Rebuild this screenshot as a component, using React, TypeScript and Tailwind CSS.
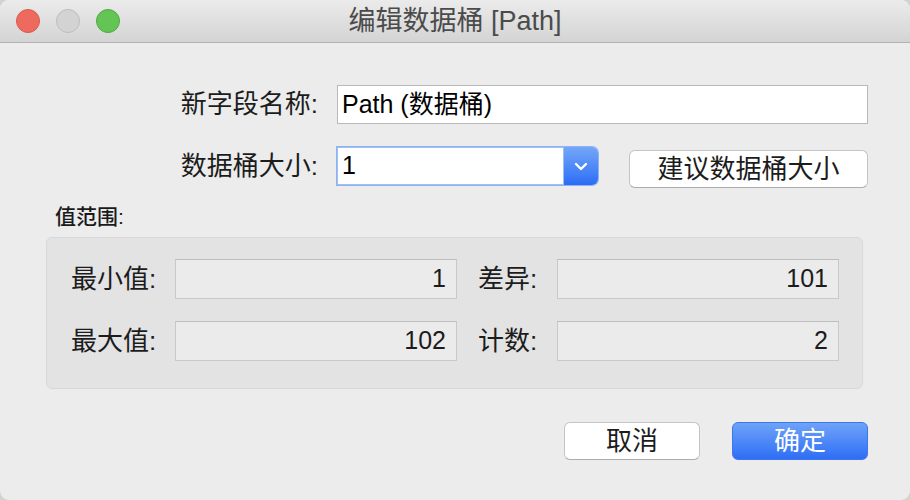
import React from 'react'

const font = { fontFamily: '"Liberation Sans", "Noto Sans CJK SC", sans-serif' }

function ReadOnlyField({ value }: { value: string }) {
  return (
    <div className="w-[282px] h-[40px] bg-[#ebebeb] border border-[#c9c9c9] border-t-[#bdbdbd] flex items-center justify-end pr-[10px] text-[25px] text-[#1c1c1c]">
      {value}
    </div>
  )
}

export default function App() {
  return (
    <div className="w-[910px] h-[500px] bg-[#cfd5cb]" style={font}>
      <div className="relative w-[910px] h-[500px] bg-[#ececec] rounded-[9px] overflow-hidden flex flex-col">
        {/* title bar */}
        <div className="relative h-[43px] shrink-0 bg-gradient-to-b from-[#ebebeb] to-[#d4d4d4] border-b border-[#b3b3b3] flex items-center pl-[16px] gap-[16px]">
          <div className="w-6 h-6 rounded-full bg-[#ee6a5f] border border-[#d65a4f]" />
          <div className="w-6 h-6 rounded-full bg-[#d3d3d3] border border-[#bdbdbd]" />
          <div className="w-6 h-6 rounded-full bg-[#62c554] border border-[#52a843]" />
          <div className="absolute inset-0 flex items-center justify-center text-[27px] text-[#4b4b4b] pointer-events-none">
            编辑数据桶 [Path]
          </div>
        </div>

        {/* form rows */}
        <div className="flex items-center mt-[42px]">
          <div className="w-[318px] text-right text-[26px] text-[#1c1c1c]">新字段名称:</div>
          <div className="ml-[19px] w-[531px] h-[39px] bg-white border border-[#b9b9b9] flex items-center pl-[4px] text-[25px] text-black">
            Path (数据桶)
          </div>
        </div>

        <div className="flex items-start mt-[23px]">
          <div className="w-[318px] h-[38px] flex items-center justify-end text-[26px] text-[#1c1c1c]">数据桶大小:</div>
          <div className="ml-[19px] w-[261px] h-[38px] flex rounded-r-[6px] shadow-[0_0_0_1px_#8fb3f2]">
            <div className="flex-1 bg-white border border-[#9fbff3] flex items-center pl-[4px] text-[25px] text-black">1</div>
            <div className="w-[34px] rounded-r-[6px] bg-gradient-to-b from-[#74a6f8] to-[#2d6cf5] flex items-center justify-center">
              <svg width="14" height="9" viewBox="0 0 14 9">
                <path d="M2 2 L7 7 L12 2" fill="none" stroke="white" strokeWidth="2.4" strokeLinecap="round" strokeLinejoin="round" />
              </svg>
            </div>
          </div>
          <button className="ml-[31px] mt-[3px] w-[239px] h-[38px] bg-white border border-[#c4c4c4] border-b-[#acacac] rounded-[6px] text-[26px] text-[#1c1c1c] flex items-center justify-center">
            建议数据桶大小
          </button>
        </div>

        <div className="ml-[55px] mt-[14px] h-[30px] flex items-center text-[21px] font-medium text-[#1a1a1a]">值范围:</div>

        <div className="ml-[46px] mt-[5px] w-[817px] h-[152px] bg-[#e3e3e3] border border-[#d8d8d8] rounded-[6px] pl-[24px] pt-[21px] flex flex-col gap-[22px]">
          <div className="flex items-center">
            <div className="w-[104px] text-[26px] text-[#1c1c1c]">最小值:</div>
            <ReadOnlyField value="1" />
            <div className="w-[100px] pl-[21px] text-[26px] text-[#1c1c1c]">差异:</div>
            <ReadOnlyField value="101" />
          </div>
          <div className="flex items-center">
            <div className="w-[104px] text-[26px] text-[#1c1c1c]">最大值:</div>
            <ReadOnlyField value="102" />
            <div className="w-[100px] pl-[21px] text-[26px] text-[#1c1c1c]">计数:</div>
            <ReadOnlyField value="2" />
          </div>
        </div>

        <div className="flex justify-end gap-[32px] pr-[42px] mt-[33px]">
          <button className="w-[136px] h-[38px] bg-white border border-[#c4c4c4] border-b-[#acacac] rounded-[6px] text-[26px] text-[#1c1c1c] flex items-center justify-center">
            取消
          </button>
          <button className="w-[136px] h-[38px] rounded-[6px] bg-gradient-to-b from-[#6fa2f8] to-[#2e6df5] border border-[#3b78f0] text-[26px] text-white flex items-center justify-center">
            确定
          </button>
        </div>
      </div>
    </div>
  )
}
